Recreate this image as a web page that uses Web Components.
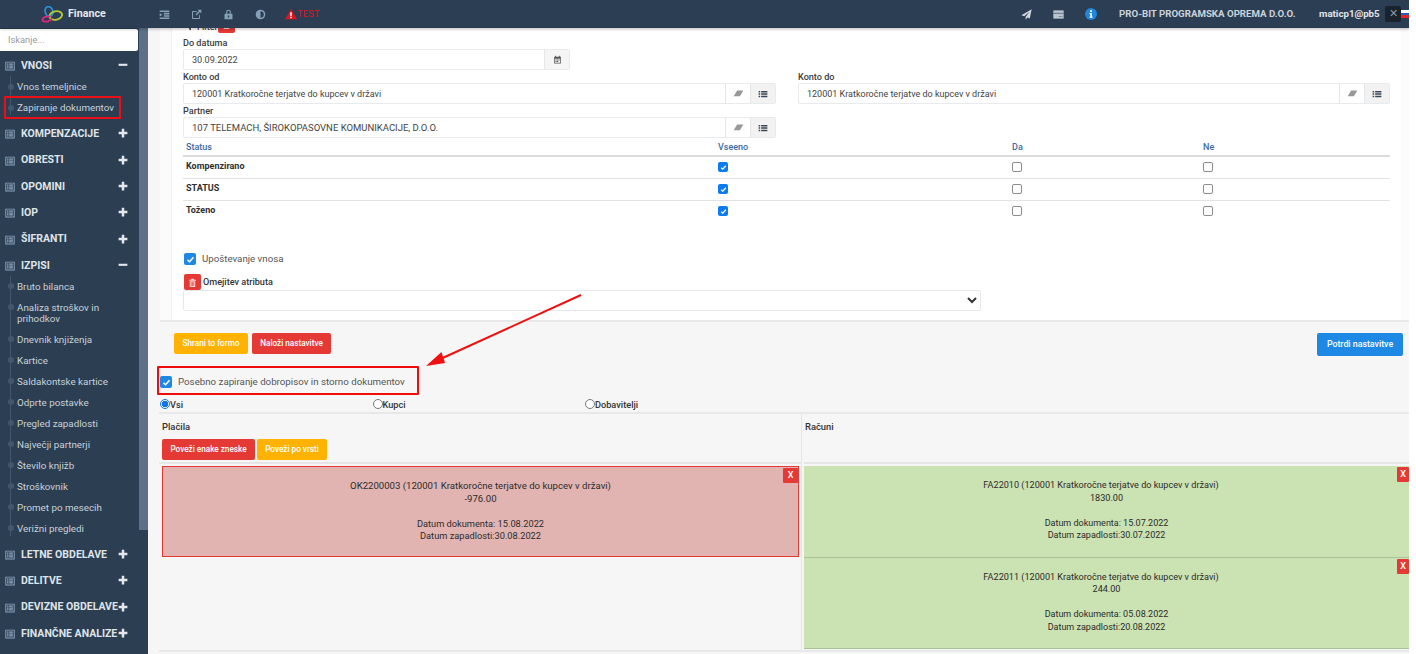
<!DOCTYPE html>
<html lang="sl">
<head>
<meta charset="utf-8">
<title>Finance</title>
<style>
html,body{margin:0;padding:0;background:#fff;overflow:hidden}
body{font:9.6px/12.5px Roboto,"Liberation Sans",sans-serif;color:#333}
</style>
</head>
<body>
<fin-app>
  <fin-topbar slot="top"></fin-topbar>
  <fin-sidebar slot="side">
    <nav-group label="Vnosi" open>
      <nav-item>Vnos temeljnice</nav-item>
      <nav-item marked>Zapiranje dokumentov</nav-item>
    </nav-group>
    <nav-group label="Kompenzacije"></nav-group>
    <nav-group label="Obresti"></nav-group>
    <nav-group label="Opomini"></nav-group>
    <nav-group label="IOP"></nav-group>
    <nav-group label="Šifranti"></nav-group>
    <nav-group label="Izpisi" open>
      <nav-item>Bruto bilanca</nav-item>
      <nav-item>Analiza stroškov in prihodkov</nav-item>
      <nav-item>Dnevnik knjiženja</nav-item>
      <nav-item>Kartice</nav-item>
      <nav-item>Saldakontske kartice</nav-item>
      <nav-item>Odprte postavke</nav-item>
      <nav-item>Pregled zapadlosti</nav-item>
      <nav-item>Največji partnerji</nav-item>
      <nav-item>Število knjižb</nav-item>
      <nav-item>Stroškovnik</nav-item>
      <nav-item>Promet po mesecih</nav-item>
      <nav-item>Verižni pregledi</nav-item>
    </nav-group>
    <nav-group label="Letne obdelave"></nav-group>
    <nav-group label="Delitve"></nav-group>
    <nav-group label="Devizne obdelave"></nav-group>
    <nav-group label="Finančne analize"></nav-group>
  </fin-sidebar>
  <fin-filter slot="main"></fin-filter>
  <fin-actions slot="main"></fin-actions>
  <fin-closing slot="main"></fin-closing>
</fin-app>

<script>
const ICONS={
 listbox:'<path fill-rule="evenodd" d="M.5 1h15v14H.5zM2 2.500v11h12v-11z"/><path d="M3.300 4h2.400v2H3.300zM6.700 4h6v2h-6zM3.300 7h2.400v2H3.300zM6.700 7h6v2h-6zM3.300 10h2.400v2H3.300zM6.700 10h6v2h-6z"/>',
 plus:'<path d="M6 1h4v5h5v4h-5v5H6v-5H1V6h5z"/>',
 minus:'<path d="M1 6h14v3.400H1z"/>',
 indent:'<path d="M1 2h14v2.400H1zM7 5.600h8V8H7zM7 9h8v2.400H7zM1 12.400h14v2H1zM1 6l4 2.400-4 2.400z"/>',
 ext:'<path fill-rule="evenodd" d="M2.500 3H9L7.700 4.400H3v8.800h8.600V9.400L13 8v5.500a1 1 0 0 1-1 1H2.500a1 1 0 0 1-1-1V4a1 1 0 0 1 1-1z"/><path d="M9.500 1H15v5.500l-2-2-4.800 4.800-1.500-1.500L11.500 3z"/>',
 lock:'<path fill-rule="evenodd" d="M8 1a3.400 3.400 0 0 1 3.400 3.400V7H13a.8.8 0 0 1 .8.8v6.400a.8.8 0 0 1-.8.8H3a.8.8 0 0 1-.8-.8V7.800a.8.8 0 0 1 .8-.8h1.600V4.400A3.400 3.400 0 0 1 8 1zM6.200 7h3.600V4.400a1.800 1.800 0 0 0-3.600 0zM7 9.500v3h2v-3z"/>',
 adjust:'<path fill-rule="evenodd" d="M8 1a7 7 0 1 1 0 14A7 7 0 0 1 8 1zm0 2.200v9.600a4.800 4.800 0 0 0 0-9.600z"/>',
 plane:'<path d="M15.500.5 .5 9l4.200 1.700L12.500 4 6.700 11.500V15.500l2.600-3.200 3.500 1.500z"/>',
 card:'<path d="M.5 2h15v12H.5z"/><path fill="#6d7f90" d="M.5 5.600h15v1.600H.5zM8 10h6v1.400H8z"/>',
 eraser:'<path d="M6 3.500h9L10 12H1z" opacity=".9"/>',
 list:'<path d="M1 3h2.400v2.400H1zM5 3h10v2.400H5zM1 6.800h2.400v2.400H1zM5 6.800h10v2.400H5zM1 10.600h2.400V13H1zM5 10.600h10V13H5z"/>',
 cal:'<path fill-rule="evenodd" d="M2 3h2V1.500h1.600V3h4.800V1.500H12V3h2v12H2zm1.300 3.600v7.100h9.400V6.600z"/><path d="M4.500 8h2v1.600h-2zM7.200 8h2v1.600h-2zM9.900 8h1.800v1.600H9.900zM4.500 10.800h2v1.600h-2zM7.200 10.800h2v1.600h-2z"/>',
 trash:'<path d="M3 4h10v1.400H3zM6 2.400h4V4H6z"/><path fill-rule="evenodd" d="M4 6h8v8.500H4zm1.500 1.200v6h1v-6zm2 0v6h1v-6zm2 0v6h1v-6z"/>',
 funnel:'<path d="M1 2h14L9.700 8.500V15L6.300 12.500V8.500z"/>'
};
const svg=(n,s,c)=>`<svg width="${s}" height="${s}" viewBox="0 0 16 16" fill="${c||'currentColor'}" aria-hidden="true" style="display:block;flex:none">${ICONS[n]}</svg>`;

class Base extends HTMLElement{
  constructor(){super();this.attachShadow({mode:'open'})}
  render(css,html){this.shadowRoot.innerHTML=`<style>${css}</style>${html}`}
}

customElements.define('fin-app',class extends Base{connectedCallback(){this.render(`
  :host{display:grid;grid-template:28px 626px / 148px 1261px;width:1409px;height:654px;position:relative;overflow:hidden;background:#f6f6f6}
  .top{grid-column:1/3;position:relative;z-index:3}
  .side{overflow:hidden;background:#2b3e52}
  .main{overflow:hidden;background:#f6f6f6;display:block}
  .arrow{position:absolute;left:0;top:0;z-index:2;pointer-events:none}
`,`<div class="top"><slot name="top"></slot></div>
 <div class="side"><slot name="side"></slot></div>
 <div class="main"><slot name="main"></slot></div>
 <svg class="arrow" width="1409" height="654"><line x1="581" y1="295" x2="436" y2="361" stroke="#f01010" stroke-width="2"/><path d="M426 366 441.500 352 445 363z" fill="#f01010"/></svg>`)}});

customElements.define('fin-topbar',class extends Base{connectedCallback(){this.render(`
  :host{display:flex;align-items:center;height:28px;background:#2b3e54;box-shadow:0 1px 3px rgba(0,0,0,.28);position:relative;font-weight:700;font-size:9.700px}
  .logo{width:148px;display:flex;align-items:center;flex:none;padding-left:41px;box-sizing:border-box;gap:5px;color:#e6eaee;font-size:10.700px}
  .icons{display:flex;align-items:center;flex:none;color:#86a0b8;margin-left:11px}
  .icons span{display:block;width:32px}
  .warn{display:flex;align-items:center;gap:0;color:#dc1420;font-weight:400;font-size:9.200px;letter-spacing:.3px;margin-left:-2px}
  .right{margin-left:auto;display:flex;align-items:center;color:#cdd3da}
  .r{display:flex;width:32px}
  .co{margin-left:2px;width:200px;white-space:nowrap}
  .user{width:66px;color:#e1e5e9;white-space:nowrap}
  .x{width:16px;height:16px;background:#18232e;border-radius:2px;display:flex;align-items:center;justify-content:center;color:#8b97a3;font-weight:400;font-size:11px}
  .flag{width:8px;height:8px;overflow:hidden;background:linear-gradient(#fff 33%,#2a5cc4 33% 66%,#e3242b 66%)}
`,`<div class="logo">
   <svg width="22" height="17" viewBox="0 0 22 17" fill="none" aria-hidden="true">
     <ellipse cx="8" cy="5.500" rx="3.800" ry="5" stroke="#2a93d8" stroke-width="1.700" transform="rotate(-18 8 5.500)"/>
     <ellipse cx="14.800" cy="9.500" rx="6.400" ry="4.200" stroke="#b6cc2e" stroke-width="1.900" transform="rotate(-14 14.800 9.500)"/>
     <path d="M9.500 10.500C6 9.800 2 11 1.400 13.500 1 15.500 4.500 16.200 7 15.300 8.800 14.600 10.300 13.500 11 12.500" stroke="#e0257f" stroke-width="1.800"/>
   </svg><span>Finance</span></div>
 <div class="icons">
   <span>${svg('indent',11)}</span><span>${svg('ext',11)}</span><span>${svg('lock',11)}</span><span>${svg('adjust',11)}</span>
   <div class="warn"><svg width="12" height="12" viewBox="0 0 16 16" aria-hidden="true"><path d="M8 1 16 15H0z" fill="#dc1420"/><path d="M7 5.500h2v5H7zM7 11.500h2v2H7z" fill="#fff"/></svg>TEST</div>
 </div>
 <div class="right">
   <span class="r" style="color:#d2d7dc">${svg('plane',11)}</span>
   <span class="r" style="color:#bcc5cd">${svg('card',11)}</span>
   <span class="r"><svg width="12" height="12" viewBox="0 0 16 16" aria-hidden="true" style="display:block"><circle cx="8" cy="8" r="8" fill="#1f86dc"/><path d="M6.800 3h2.400v2.200H6.800zM6 6.500h3.200v5H10.200V13H6v-1.500h1V8H6z" fill="#fff"/></svg></span>
   <span class="co">PRO-BIT PROGRAMSKA OPREMA D.O.O.</span>
   <span class="user">maticp1@pb5</span>
   <span class="x">✕</span>
   <span class="flag"></span>
 </div>`)}});

customElements.define('fin-sidebar',class extends Base{connectedCallback(){this.render(`
  :host{display:flex;height:626px;width:148px;background:#2b3e52}
  .col{width:139px;flex:none}
  .search{height:22px;margin:1px 1px 2px 0;background:#fff;border-radius:0 2px 2px 0;color:#9a9a9a;padding-left:8px;line-height:22px;font-size:9.300px;box-sizing:border-box}
  .bar{width:9px;flex:none;height:502px;background:#5c7087}
`,`<div class="col"><div class="search">Iskanje...</div><slot></slot></div><div class="bar"></div>`)}});

customElements.define('nav-group',class extends Base{connectedCallback(){
  const open=this.hasAttribute('open');
  this.render(`
  :host{display:block;color:#dfe4e9}
  .h{display:flex;align-items:center;height:26.300px;padding:0 11px 0 5px;font-weight:700;font-size:10.500px;text-transform:uppercase;white-space:nowrap}
  .ic{color:#8ea6bd;margin-right:6px}
  .t{flex:1;min-width:0}
  .sign{color:#e4e8ec;margin-top:-2px}
  .sub{position:relative;margin:-3px 0 2.900px}
  .sub::before{content:"";position:absolute;left:10px;top:0;bottom:3px;width:1px;background:#43576c}
`,`<div class="h"><span class="ic">${svg('listbox',10)}</span><span class="t" part="label">${this.getAttribute('label')}</span><span class="sign">${svg(open?'minus':'plus',10)}</span></div>
   ${open?'<div class="sub"><slot></slot></div>':''}`)}});

customElements.define('nav-item',class extends Base{connectedCallback(){this.render(`
  :host{display:block;position:relative;padding:5px 4px 5px 17px;color:#c9d2db;font-size:9.800px;line-height:11px}
  .dot{position:absolute;left:8px;top:7.500px;width:6px;height:6px;border-radius:50%;background:#43576c}
  :host([marked])::after{content:"";position:absolute;left:4px;top:-1px;width:113px;height:19px;border:2px solid #ee0f16;border-radius:1px}
`,`<span class="dot"></span><slot></slot>`)}});

customElements.define('fin-input',class extends Base{connectedCallback(){
  const adds=(this.getAttribute('add')||'').split(' ').filter(Boolean);
  const map={cal:[svg('cal',9,'#555'),'#f5f5f5'],eraser:[svg('eraser',11,'#8d8d8d'),'#fff'],list:[svg('list',10,'#3b4754'),'#f2f2f2']};
  this.render(`
  :host{display:block}
  label{display:block;height:13px;font-weight:500;font-size:9.100px;line-height:15px;color:#3c3c3c;white-space:nowrap}
  .box{display:flex;height:21px;border:1px solid #e8ebee;border-radius:2px;box-sizing:border-box;background:#fff}
  .v{flex:1;padding-left:8px;line-height:20px;color:#444;white-space:nowrap;overflow:hidden;font-size:${this.getAttribute('fs')||9.2}px}
  .a{width:24px;flex:none;display:flex;align-items:center;justify-content:center;border-left:1px solid #e4e6e8}
`,`<label>${this.getAttribute('label')}</label><div class="box"><div class="v">${this.getAttribute('value')}</div>${adds.map(a=>`<div class="a" style="background:${map[a][1]}">${map[a][0]}</div>`).join('')}</div>`)}});

customElements.define('ui-check',class extends Base{connectedCallback(){
  const s=+this.getAttribute('size')||11,on=this.hasAttribute('checked');
  const c=this.getAttribute('color')||'#0d7bf0';
  this.render(`
  :host{display:block;width:${s}px;height:${s}px;flex:none}
  .b{box-sizing:border-box;width:100%;height:100%;border-radius:2px;${on?`background:${c}`:'background:#fff;border:1px solid #8c8c8c'};display:flex;align-items:center;justify-content:center}
`,`<div class="b">${on?`<svg width="${s-3}" height="${s-3}" viewBox="0 0 12 12" fill="none" aria-hidden="true"><path d="M2 6.500 4.800 9 10 3" stroke="#fff" stroke-width="2"/></svg>`:''}</div>`)}});

customElements.define('ui-btn',class extends Base{connectedCallback(){
  const col={red:'#e53935',amber:'#ffb300',blue:'#1e88e5'}[this.getAttribute('tone')];
  this.render(`
  :host{display:inline-flex;flex:none}
  div{background:${col};color:#fff;height:${this.getAttribute('h')||21}px;width:${this.getAttribute('w')}px;display:flex;align-items:center;justify-content:center;border-radius:2px;font-size:${this.getAttribute('fs')||8.2}px;font-weight:500;white-space:nowrap}
`,`<div><slot></slot></div>`)}});

customElements.define('trash-btn',class extends Base{connectedCallback(){this.render(`
  :host{display:flex;width:17px;height:17px;background:#e53935;border-radius:2px;align-items:center;justify-content:center;flex:none}
`,svg('trash',11,'#f7d9d8'))}});

customElements.define('status-table',class extends Base{connectedCallback(){
  const rows=['Kompenzirano','STATUS','Toženo'];
  this.render(`
  :host{display:block;width:1207px;font-size:9px}
  .r{display:grid;grid-template-columns:532px 294px 191px 1fr;padding-left:3px;box-sizing:border-box}
  .head{height:17px;border-bottom:2px solid #dcdcdc;color:#3e6aa3;font-weight:500;line-height:18px;box-sizing:content-box}
  .row{height:21px;border-bottom:1px solid #e2e2e2;font-weight:700;color:#2f2f2f;line-height:18px;box-sizing:content-box}
  .row:last-child{border-bottom:0}
  ui-check{margin-top:5px}
`,`<div class="r head"><span>Status</span><span>Vseeno</span><span>Da</span><span>Ne</span></div>
  ${rows.map(t=>`<div class="r row"><span>${t}</span><ui-check size="10" checked></ui-check><ui-check size="10"></ui-check><ui-check size="10"></ui-check></div>`).join('')}`)}});

customElements.define('fin-filter',class extends Base{connectedCallback(){this.render(`
  :host{display:block;margin-left:12px;background:#fbfbfb;border-bottom:2px solid #e8e8e8;height:292px;box-sizing:content-box}
  .in{margin:0 8px 0 11px;height:100%;background:#fff;border-left:1px solid #f1f1f1;padding-left:11px;box-sizing:border-box}
  .fh{height:8px;display:flex;align-items:flex-end;padding-bottom:3px;box-sizing:border-box;padding-left:3px;font-weight:500;color:#444;font-size:9.100px}
  .fh span{display:flex;align-items:center;gap:3px;width:32px;white-space:nowrap}
  .w1{width:387px}
  .two{display:grid;grid-template-columns:593px 592px;column-gap:22px}
  .w2{width:593px}
  .use{display:flex;align-items:center;gap:6px;margin:31px 0 0 1px;height:12px;color:#555;font-size:9.700px}
  .om{display:flex;align-items:center;gap:2px;margin-top:9px;height:16px;font-weight:500;color:#333;padding-left:1px;font-size:9.100px}
  .om trash-btn{height:16px}
  select{display:block;width:798px;height:21px;border:1px solid #e6e9ec;border-radius:2px;background:#fff;margin:0;padding:0 4px;font:inherit;color:#333}
`,`<div class="in">
   <div class="fh"><span>${svg('funnel',8,'#333')}Filter</span><trash-btn></trash-btn></div>
   <fin-input class="w1" label="Do datuma" value="30.09.2022" add="cal" fs="9.1"></fin-input>
   <div class="two">
     <fin-input label="Konto od" value="120001 Kratkoročne terjatve do kupcev v državi" add="eraser list" fs="9"></fin-input>
     <fin-input label="Konto do" value="120001 Kratkoročne terjatve do kupcev v državi" add="eraser list" fs="9"></fin-input>
   </div>
   <fin-input class="w2" label="Partner" value="107 TELEMACH, ŠIROKOPASOVNE KOMUNIKACIJE, D.O.O." add="eraser list" fs="9.5"></fin-input>
   <status-table></status-table>
   <div class="use"><ui-check size="12" checked color="#1e88e5"></ui-check><span>Upoštevanje vnosa</span></div>
   <div class="om"><trash-btn></trash-btn><span>Omejitev atributa</span></div>
   <select aria-label="Omejitev atributa"><option></option></select>
 </div>`)}});

customElements.define('fin-actions',class extends Base{connectedCallback(){this.render(`
  :host{display:flex;align-items:flex-start;padding:11px 6px 0 26px;height:33px;gap:4px;box-sizing:content-box}
  .sp{flex:1}
`,`<ui-btn tone="amber" w="74">Shrani to formo</ui-btn><ui-btn tone="red" w="79">Naloži nastavitve</ui-btn><span class="sp"></span><ui-btn tone="blue" w="86" h="23" fs="8.8">Potrdi nastavitve</ui-btn>`)}});

customElements.define('doc-card',class extends Base{connectedCallback(){
  const g=this.getAttribute('tone')==='green';
  this.render(`
  :host{display:block;position:relative;box-sizing:border-box;height:${g?91.5:91}px;padding-top:13px;text-align:center;color:#2c2c2c;font-size:${g?9.1:9.6}px;line-height:12.500px;
    background:${g?'#cbe2b2':'#e2b4b1'};${g?'border-bottom:1px solid #a9c398':'border:1px solid #e53935'}}
  .x{position:absolute;right:0;top:1px;width:15px;height:15px;background:#e53935;color:#fff;line-height:15px;font-size:9px;font-weight:500;border-radius:1px}
  :host([tone=green]) .x{width:12px}
  .gap{height:12.500px}
  .d{font-size:${g?9:9.25}px}
  .ttl{padding-right:${g?11:0}px}
`,`<div class="x">X</div><div class="ttl">${this.getAttribute('title')}</div><div>${this.getAttribute('amount')}</div><div class="gap"></div><div class="d">Datum dokumenta: ${this.getAttribute('doc')}</div><div class="d">Datum zapadlosti:${this.getAttribute('due')}</div>`)}});

customElements.define('fin-closing',class extends Base{connectedCallback(){this.render(`
  :host{display:block;color:#333}
  .spec{margin-left:9px;width:262px;height:29px;box-sizing:border-box;border:2px solid #f00c0c;border-radius:1px;display:flex;align-items:center;gap:6px;padding:3px 0 0 1px;color:#555;font-size:9.730px;white-space:nowrap}
  .radios{display:grid;grid-template-columns:212.500px 212.500px 1fr;margin:3px 0 0 12px;height:14px;align-items:center;font-weight:500;color:#333;font-size:9.200px}
  .radios label{display:flex;align-items:center}
  .rd{width:10px;height:10px;border:1px solid #777;border-radius:50%;box-sizing:border-box;background:#fff;flex:none;margin-top:-2px}
  .rd.on{border:1px solid #1276e6;background:radial-gradient(circle,#1276e6 3px,#fff 3.600px)}
  .panel{margin-left:11px;border-top:2px solid #e8e8e8;border-bottom:2px solid #e8e8e8;display:grid;grid-template-columns:642px 608px;height:240px;box-sizing:border-box}
  .col{display:flex;flex-direction:column;min-width:0}
  .col+.col{border-left:1px solid #e6e6e6;padding-left:2px}
  .head{border-bottom:2px solid #e6e6e6;padding:6px 0 0 3px;height:42px}
  .col+.col .head{padding-left:1px}
  .t{height:19px;line-height:14px;font-weight:500;color:#333;font-size:9.400px}
  .btns{display:flex;gap:2px}
  .cards{padding:2px 2px 0 3px}
  .col+.col .cards{padding:2px 0 0 0}
`,`<div class="spec"><ui-check size="12" checked color="#1e88e5"></ui-check><span>Posebno zapiranje dobropisov in storno dokumentov</span></div>
  <div class="radios">
    <label><span class="rd on"></span>Vsi</label>
    <label><span class="rd"></span>Kupci</label>
    <label><span class="rd"></span>Dobavitelji</label>
  </div>
  <div class="panel">
    <div class="col">
      <div class="head"><div class="t">Plačila</div><div class="btns"><ui-btn tone="red" w="93">Poveži enake zneske</ui-btn><ui-btn tone="amber" w="70">Poveži po vrsti</ui-btn></div></div>
      <div class="cards"><doc-card tone="red" title="OK2200003 (120001 Kratkoročne terjatve do kupcev v državi)" amount="-976.00" doc="15.08.2022" due="30.08.2022"></doc-card></div>
    </div>
    <div class="col">
      <div class="head"><div class="t">Računi</div></div>
      <div class="cards">
        <doc-card tone="green" title="FA22010 (120001 Kratkoročne terjatve do kupcev v državi)" amount="1830.00" doc="15.07.2022" due="30.07.2022"></doc-card>
        <doc-card tone="green" title="FA22011 (120001 Kratkoročne terjatve do kupcev v državi)" amount="244.00" doc="05.08.2022" due="20.08.2022"></doc-card>
      </div>
    </div>
  </div>`)}});
</script>
</body>
</html>
